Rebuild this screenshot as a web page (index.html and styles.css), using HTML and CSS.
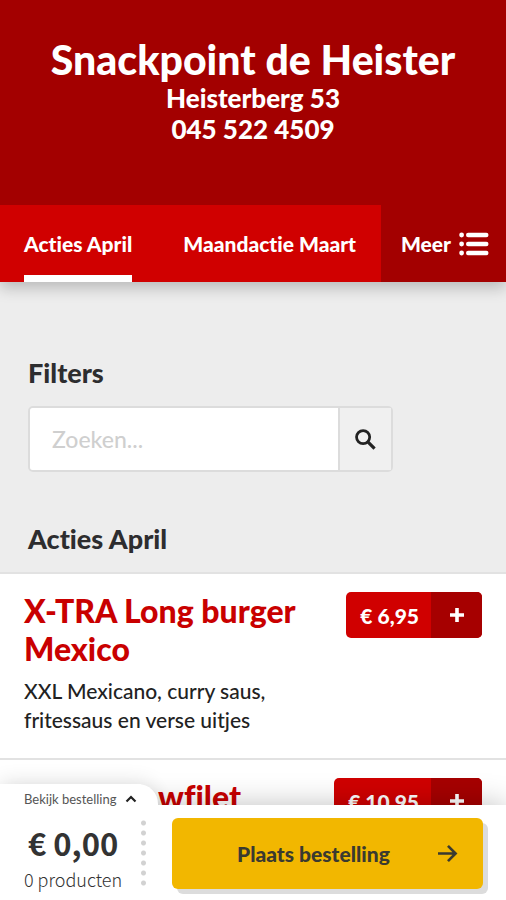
FILE: index.html
```html
<!DOCTYPE html>
<html lang="nl">
<head>
<meta charset="utf-8">
<meta name="viewport" content="width=device-width, initial-scale=1">
<title>Snackpoint de Heister</title>
<link rel="stylesheet" href="styles.css">
</head>
<body>
<header class="hero">
  <h1 class="hero-title">Snackpoint de Heister</h1>
  <p class="hero-line">Heisterberg 53</p>
  <p class="hero-line">045 522 4509</p>
</header>

<nav class="tabs">
  <div class="tab-list">
    <a class="tab tab-active" href="#acties">Acties April</a>
    <a class="tab" href="#maand">Maandactie Maart</a>
  </div>
  <button class="more" type="button">Meer
    <svg class="more-icon" viewBox="0 0 30 24" aria-hidden="true">
      <g fill="#fff">
        <circle cx="2.6" cy="3" r="2.4"/><circle cx="2.6" cy="12" r="2.4"/><circle cx="2.6" cy="21" r="2.4"/>
        <rect x="7" y="0.8" width="22.500" height="4.400" rx="2.200"/>
        <rect x="7" y="9.800" width="22.500" height="4.400" rx="2.200"/>
        <rect x="7" y="18.800" width="22.500" height="4.400" rx="2.200"/>
      </g>
    </svg>
  </button>
</nav>

<main>
  <section class="filters">
    <h2 class="heading"><label for="search">Filters</label></h2>
    <form class="search">
      <input class="search-input" id="search" type="text" placeholder="Zoeken...">
      <button class="search-button" type="button" aria-label="Zoeken">
        <svg class="search-icon" viewBox="0 0 22 22" aria-hidden="true">
          <circle cx="8.500" cy="8.500" r="6.900" fill="none" stroke="#222" stroke-width="2.900"/>
          <path d="M13.500 13.500L20.500 20.500" stroke="#222" stroke-width="3.400"/>
        </svg>
      </button>
    </form>
  </section>

  <section id="acties">
    <h2 class="heading heading-list">Acties April</h2>
    <article class="product">
      <div class="product-text">
        <h3 class="product-name">X-TRA Long burger Mexico</h3>
        <p class="product-info">XXL Mexicano, curry saus, fritessaus en verse uitjes</p>
      </div>
      <button class="price" type="button">
        <span class="price-value">€ 6,95</span>
        <span class="price-add"><svg class="plus" viewBox="0 0 16 16" role="img" aria-label="Toevoegen"><path d="M8 1v14M1 8h14" stroke="#fff" stroke-width="3.600"/></svg></span>
      </button>
    </article>
    <article class="product">
      <div class="product-text product-text-indented">
        <h3 class="product-name">wfilet</h3>
      </div>
      <button class="price" type="button">
        <span class="price-value">€ 10,95</span>
        <span class="price-add"><svg class="plus" viewBox="0 0 16 16" role="img" aria-label="Toevoegen"><path d="M8 1v14M1 8h14" stroke="#fff" stroke-width="3.600"/></svg></span>
      </button>
    </article>
  </section>
</main>

<footer class="cart">
  <button class="cart-summary" type="button">
    <span class="cart-view">Bekijk bestelling
      <svg class="chevron" viewBox="0 0 12 8" aria-hidden="true"><path d="M1.500 6.500L6 2L10.500 6.500" fill="none" stroke="#222" stroke-width="2.200"/></svg>
    </span>
    <span class="cart-total">€ 0,00</span>
    <span class="cart-count">0 producten</span>
  </button>
  <div class="cart-bar">
    <div class="cart-divider"></div>
    <button class="order" type="button">
      <span class="order-label">Plaats bestelling</span>
      <svg class="arrow" viewBox="0 0 22 20" aria-hidden="true"><path d="M1 10h18M11.500 2L19.500 10L11.500 18" fill="none" stroke="#3a3a30" stroke-width="2.800"/></svg>
    </button>
  </div>
</footer>
</body>
</html>
```
FILE: styles.css
```css
* {
  box-sizing: border-box;
}

body {
  margin: 0;
  background: #ededed;
  color: #2d2d2f;
  font-family: Lato, "Liberation Sans", sans-serif;
  font-variant-ligatures: none;
}

button {
  border: 0;
  padding: 0;
  font-family: inherit;
  cursor: pointer;
}

h1, h2, h3, p {
  margin: 0;
}

svg {
  display: block;
}

.hero {
  position: relative;
  padding: 36px 16px 60px;
  background: #a30000;
  color: #fff;
  text-align: center;
}

.hero-title {
  font-size: 41px;
  font-weight: 900;
  line-height: 47px;
}

.hero-line {
  font-size: 26px;
  font-weight: 900;
  line-height: 31px;
}

.tabs {
  display: flex;
  height: 77px;
  background: #d00000;
  box-shadow: 0 6px 14px rgba(0, 0, 0, 0.22);
}

.tab-list {
  display: flex;
  flex: 1;
  gap: 51px;
  padding-left: 24px;
}

.tab {
  display: flex;
  align-items: center;
  color: #fff;
  font-size: 21px;
  font-weight: 900;
  text-decoration: none;
  white-space: nowrap;
}

.tab-active {
  box-shadow: inset 0 -7px #fff;
}

.more {
  display: flex;
  align-items: center;
  gap: 8px;
  padding: 0 17px 0 20px;
  background: #a30000;
  color: #fff;
  font-size: 21px;
  font-weight: 900;
}

.more-icon {
  width: 30px;
  height: 24px;
}

.filters {
  padding: 75px 28px 0;
}

.heading {
  font-size: 27px;
  font-weight: 900;
  line-height: 32px;
}

.search {
  display: flex;
  width: 81%;
  height: 66px;
  margin-top: 17px;
  border: 2px solid #dcdcdc;
  border-radius: 5px;
}

.search-input {
  flex: 1;
  min-width: 0;
  padding: 0 22px;
  border: 0;
  border-radius: 3px 0 0 3px;
  background: #fff;
  color: #2d2d2f;
  font: 500 23px Lato, sans-serif;
}

.search-input::placeholder {
  color: #cfcfcf;
}

.search-button {
  display: grid;
  place-items: center;
  width: 53px;
  border-left: 2px solid #dcdcdc;
  background: #f0f0f0;
}

.search-icon {
  width: 21px;
  height: 21px;
}

.heading-list {
  padding: 51px 28px 17px;
}

.product {
  display: flex;
  align-items: flex-start;
  justify-content: space-between;
  padding: 18px 24px 24px;
  border-top: 2px solid #e2e2e2;
  background: #fff;
}

.product-text {
  width: 290px;
}

.product-text-indented {
  padding-left: 134px;
}

.product-name {
  color: #c90000;
  font-size: 32px;
  font-weight: 900;
  line-height: 38px;
}

.product-info {
  margin-top: 8px;
  color: #222;
  font-size: 21px;
  font-weight: 500;
  line-height: 29px;
}

.price {
  display: flex;
  height: 46px;
  border-radius: 5px;
  overflow: hidden;
  background: #d00000;
  color: #fff;
  font-size: 21px;
  font-weight: 900;
}

.price-value {
  align-self: center;
  padding: 0 12px 0 14px;
}

.price-add {
  display: grid;
  place-items: center;
  align-self: stretch;
  width: 51px;
  background: #a60000;
}

.plus {
  width: 16px;
  height: 16px;
}

.cart {
  position: fixed;
  right: 0;
  bottom: 0;
  left: 0;
  box-shadow: 0 0 28px rgba(0, 0, 0, 0.25);
}

.cart-bar {
  display: flex;
  gap: 26px;
  padding: 13px 23px 11px 141px;
  background: #fff;
}

.cart-divider {
  width: 5px;
  background: radial-gradient(circle, #d2d2d2 2px, transparent 3px) 0 0 / 5px 10px;
}

.cart-summary {
  position: absolute;
  bottom: 0;
  left: 0;
  display: flex;
  flex-direction: column;
  width: 141px;
  padding: 6px 0 7px 24px;
  background: #fff;
  color: #333;
  text-align: left;
}

.cart-summary::before {
  content: "";
  position: absolute;
  z-index: -1;
  top: 0;
  left: 0;
  width: 158px;
  height: 40px;
  border-radius: 0 20px 0 0;
  background: #fff;
  box-shadow: 0 -2px 20px rgba(0, 0, 0, 0.12);
}

.cart-view {
  display: flex;
  align-items: center;
  gap: 9px;
  color: #555;
  font-size: 13px;
  line-height: 18px;
  white-space: nowrap;
}

.chevron {
  width: 12px;
  height: 8px;
}

.cart-total {
  margin-top: 17px;
  padding-left: 4px;
  font-family: "Noto Sans CJK SC", sans-serif;
  font-size: 31px;
  font-weight: 700;
  line-height: 36px;
}

.cart-count {
  margin-top: 4px;
  font-family: "Noto Sans CJK SC", sans-serif;
  font-size: 18px;
  font-weight: 300;
  line-height: 28px;
}

.order {
  display: flex;
  flex: 1;
  align-items: center;
  height: 71px;
  padding: 0 25px 0 65px;
  border-radius: 6px;
  background: #f2b700;
  box-shadow: 5px 5px #dcdcdc;
  color: #3a3a30;
  font-size: 21px;
  font-weight: 900;
}

.order-label {
  flex: 1;
  text-align: left;
  white-space: nowrap;
}

.arrow {
  width: 21px;
  height: 19px;
}
```
